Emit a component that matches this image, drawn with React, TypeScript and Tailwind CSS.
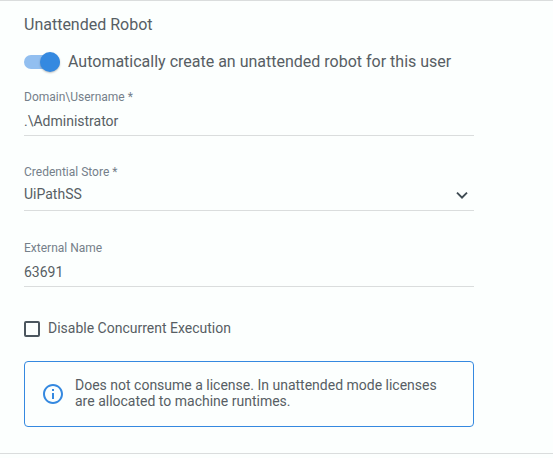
import { MdInfoOutline } from "react-icons/md";

type FieldProps = {
  label: string;
  value: string;
  className: string;
  valueClass: string;
  select?: boolean;
};

function Field({ label, value, className, valueClass, select }: FieldProps) {
  return (
    <div className={`flex flex-col border-b border-[#dadddd] ${className}`}>
      <label className="text-xs leading-4 text-[#75808a]">{label}</label>
      <div className={`flex items-center justify-between text-sm leading-5 text-[#575e64] ${valueClass}`}>
        <span>{value}</span>
        {select && (
          <svg className="mr-1.5 mt-[3px] h-[7px] w-3" viewBox="0 0 12 7.4" fill="#3f4b53">
            <path d="M6 7.4 0 1.4 1.4 0 6 4.6 10.6 0 12 1.4Z" />
          </svg>
        )}
      </div>
    </div>
  );
}

export default function App() {
  return (
    <div className="h-[458px] w-full bg-[#fcfffe] font-['Roboto',sans-serif] text-[#575e64]">
      <section className="flex h-[454px] flex-col border-y border-[#dadddd] pl-6 pr-[79px] pt-3">
        <h2 className="text-base leading-6">Unattended Robot</h2>

        <div className="mt-[13px] flex h-6 items-center gap-2">
          <div className="flex h-3.5 w-9 items-center justify-end rounded-full bg-[#92bff0]">
            <span className="h-5 w-5 shrink-0 rounded-full bg-[#3589e0] shadow-[0_1px_2px_rgba(0,0,0,0.25)]" />
          </div>
          <span className="text-base leading-6">Automatically create an unattended robot for this user</span>
        </div>

        <Field label="Domain\Username *" value=".\Administrator" className="mt-[15px] h-[47px]" valueClass="mt-1.5" />
        <Field label="Credential Store *" value="UiPathSS" className="mt-7 h-[47px]" valueClass="mt-1" select />
        <Field label="External Name" value="63691" className="mt-[29px] h-[47px]" valueClass="mt-1.5" />

        <div className="mt-[31px] flex items-start gap-2">
          <span className="mt-[3px] h-4 w-4 rounded-[2px] border-2 border-[#4b565e]" />
          <span className="text-sm leading-5">Disable Concurrent Execution</span>
        </div>

        <div className="mt-[23px] flex h-[66px] items-center rounded-[4px] border border-[#3589e0] pl-4">
          <MdInfoOutline className="h-6 w-6 shrink-0 text-[#3589e0]" />
          <p className="mb-0.5 ml-2.5 text-sm leading-4">
            Does not consume a license. In unattended mode licenses
            <br />
            are allocated to machine runtimes.
          </p>
        </div>
      </section>
    </div>
  );
}
